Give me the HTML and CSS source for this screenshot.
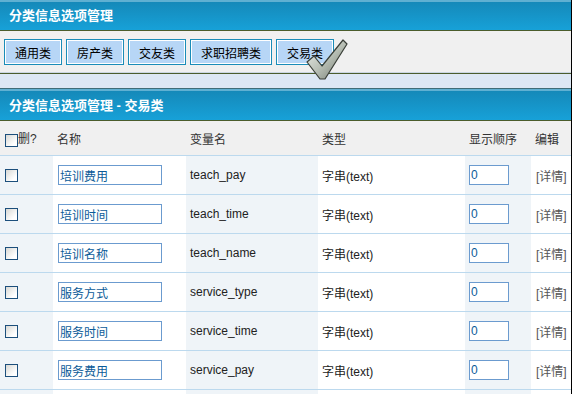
FILE: index.html
```html
<!DOCTYPE html>
<html lang="zh-CN">
<head>
    <meta charset="UTF-8">
    <title>分类信息选项管理</title>
    <link rel="stylesheet" href="styles.css">
</head>
<body>
    <div class="page">
        <!-- 顶部标题 -->
        <div class="title-bar first">分类信息选项管理</div>

        <!-- 分类按钮 -->
        <div class="toolbar">
            <button class="cat-btn">通用类</button>
            <button class="cat-btn">房产类</button>
            <button class="cat-btn">交友类</button>
            <button class="cat-btn">求职招聘类</button>
            <button class="cat-btn active">交易类
                <svg class="tick" width="44" height="44" viewBox="0 0 44 44">
                    <defs>
                        <linearGradient id="silver" x1="0" y1="0" x2="1" y2="1">
                            <stop offset="0" stop-color="#f4f6f2"/>
                            <stop offset="0.5" stop-color="#b9c0b6"/>
                            <stop offset="1" stop-color="#6e766c"/>
                        </linearGradient>
                    </defs>
                    <polygon points="2,24 9,18 17,28 38,2 42,6 20,41 15,41" fill="url(#silver)" stroke="#3a3f38" stroke-width="1.2" stroke-linejoin="round"/>
                </svg>
            </button>
        </div>
        <div class="spacer"></div>

        <!-- 选项列表 -->
        <div class="title-bar">分类信息选项管理 - 交易类</div>
        <table class="opt-table">
            <colgroup>
                <col class="c-del"><col class="c-name"><col class="c-var">
                <col class="c-type"><col class="c-order"><col class="c-edit">
            </colgroup>
            <thead>
                <tr>
                    <th><input type="checkbox" class="chk">删?</th>
                    <th>名称</th>
                    <th>变量名</th>
                    <th>类型</th>
                    <th>显示顺序</th>
                    <th>编辑</th>
                </tr>
            </thead>
            <tbody>
                <tr>
                    <td><input type="checkbox" class="chk"></td>
                    <td><input type="text" class="txt name" value="培训费用"></td>
                    <td class="var">teach_pay</td>
                    <td>字串(text)</td>
                    <td><input type="text" class="txt order" value="0"></td>
                    <td class="edit">[详情]</td>
                </tr>
                <tr>
                    <td><input type="checkbox" class="chk"></td>
                    <td><input type="text" class="txt name" value="培训时间"></td>
                    <td class="var">teach_time</td>
                    <td>字串(text)</td>
                    <td><input type="text" class="txt order" value="0"></td>
                    <td class="edit">[详情]</td>
                </tr>
                <tr>
                    <td><input type="checkbox" class="chk"></td>
                    <td><input type="text" class="txt name" value="培训名称"></td>
                    <td class="var">teach_name</td>
                    <td>字串(text)</td>
                    <td><input type="text" class="txt order" value="0"></td>
                    <td class="edit">[详情]</td>
                </tr>
                <tr>
                    <td><input type="checkbox" class="chk"></td>
                    <td><input type="text" class="txt name" value="服务方式"></td>
                    <td class="var">service_type</td>
                    <td>字串(text)</td>
                    <td><input type="text" class="txt order" value="0"></td>
                    <td class="edit">[详情]</td>
                </tr>
                <tr>
                    <td><input type="checkbox" class="chk"></td>
                    <td><input type="text" class="txt name" value="服务时间"></td>
                    <td class="var">service_time</td>
                    <td>字串(text)</td>
                    <td><input type="text" class="txt order" value="0"></td>
                    <td class="edit">[详情]</td>
                </tr>
                <tr>
                    <td><input type="checkbox" class="chk"></td>
                    <td><input type="text" class="txt name" value="服务费用"></td>
                    <td class="var">service_pay</td>
                    <td>字串(text)</td>
                    <td><input type="text" class="txt order" value="0"></td>
                    <td class="edit">[详情]</td>
                </tr>
                <tr>
                    <td></td><td></td><td></td><td></td><td></td><td></td>
                </tr>
            </tbody>
        </table>
    </div>
</body>
</html>
```

FILE: styles.css
```css
html, body {
    margin: 0;
    padding: 0;
    overflow: hidden;
    background: #000;
}
body {
    font-family: "Liberation Sans", "Noto Sans CJK SC", sans-serif;
    font-size: 12px;
    color: #222;
}
.page {
    width: 571px;
    height: 394px;
    background: #fff;
    overflow: hidden;
}
.title-bar {
    height: 32px;
    line-height: 30px;
    padding-left: 9px;
    color: #fff;
    font-size: 13px;
    font-weight: bold;
    background: linear-gradient(#1589b9, #17a1d8);
    border-top: 2px solid #5fb0d2;
    border-bottom: 1px solid #4b5d2c;
    box-sizing: border-box;
}
.title-bar.first {
    height: 31px;
    line-height: 28px;
}
.toolbar {
    display: flex;
    gap: 4px;
    padding: 8px 4px 7px;
    background: #f0f0f0;
    border-bottom: 1px solid #c9d6e2;
}
.cat-btn {
    position: relative;
    height: 26px;
    padding: 0 10px;
    font-family: inherit;
    font-size: 12px;
    color: #000;
    background: #b7d6f6;
    border: 1px solid #1a8cb8;
    box-shadow: inset 0 0 0 1px #fff;
    cursor: pointer;
}
.tick {
    position: absolute;
    left: 28px;
    top: -2px;
}
.spacer {
    height: 14px;
    background: #dce7f4;
    border-top: 1px solid #4b5d2c;
    border-bottom: 1px solid #3f6c78;
}
.opt-table {
    width: 571px;
    border-collapse: collapse;
    table-layout: fixed;
}
.c-del { width: 53px; }
.c-name { width: 133px; }
.c-var { width: 132px; }
.c-type { width: 147px; }
.c-order { width: 66px; }
.c-edit { width: 40px; }
.opt-table th {
    height: 34px;
    padding: 0 4px;
    text-align: left;
    font-weight: normal;
    color: #333;
    background: #f0f0f0;
    border-bottom: 1px solid #bcd9ee;
    white-space: nowrap;
}
.opt-table th:first-child {
    padding-left: 5px;
}
.opt-table td {
    height: 38px;
    padding: 0 4px;
    border-bottom: 1px solid #bcd9ee;
    white-space: nowrap;
}
.opt-table td:first-child {
    padding-left: 5px;
}
.opt-table td:nth-child(odd) {
    background: #eff4f8;
}
.opt-table td:nth-child(2),
.opt-table td:nth-child(6) {
    padding-left: 5px;
}
.chk {
    appearance: none;
    width: 13px;
    height: 13px;
    margin: 0;
    vertical-align: middle;
    border: 1px solid #1c4f7c;
    background: linear-gradient(135deg, #d8d8d4, #fff 75%);
}
.txt {
    height: 20px;
    box-sizing: border-box;
    padding: 0 1px;
    font-family: "Liberation Sans", "Noto Sans CJK SC", sans-serif;
    font-size: 12px;
    color: #0b5b98;
    border: 1px solid #6b9bcf;
    background: #fff;
    outline: none;
}
.txt.name { width: 104px; }
.txt.order { width: 40px; }
.var {
    padding-left: 4px;
}
.edit {
    color: #555;
}
```
